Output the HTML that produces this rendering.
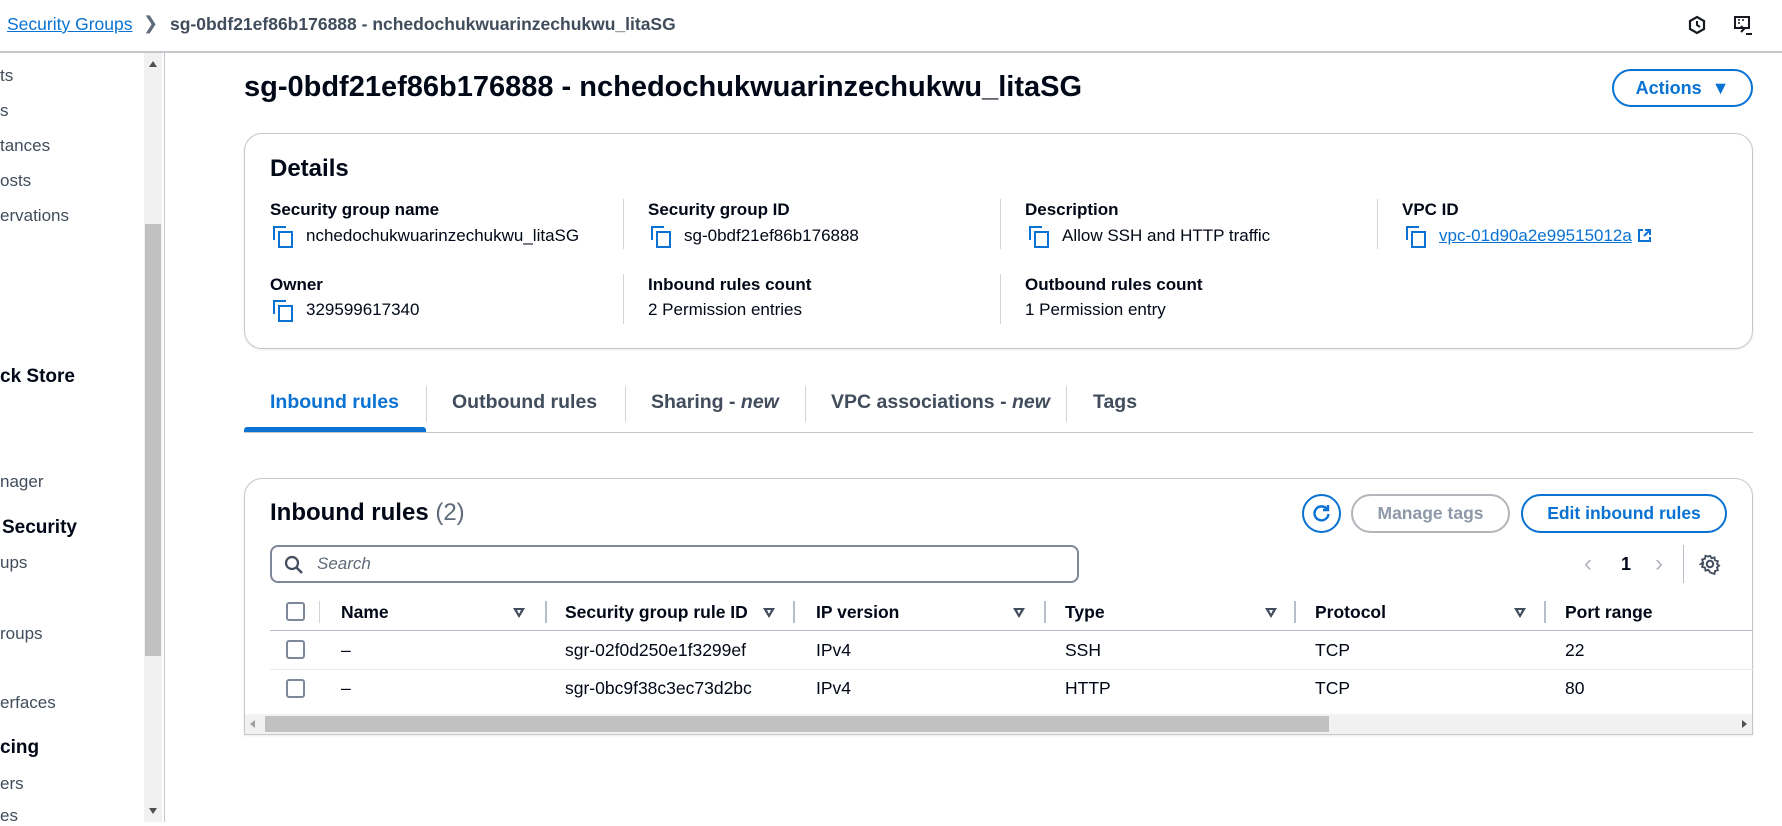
<!DOCTYPE html>
<html><head><meta charset="utf-8"><style>
*{margin:0;padding:0;box-sizing:border-box}
body{width:1782px;height:822px;overflow:hidden;background:#fff;font-family:"Liberation Sans",sans-serif;color:#000716;font-size:17px;position:relative}
.a{position:absolute;white-space:nowrap}
.b{font-weight:bold}
.lbl{font-weight:bold;font-size:17px}
.tab{font-size:19.5px;font-weight:bold;color:#414d5c}
.blue{color:#0972d3}
.cp{display:inline-block;width:17px;height:18px;position:relative;vertical-align:-3px;margin-right:16px}
.cp:before{content:"";position:absolute;left:0;top:0;width:11px;height:12px;border-left:2.5px solid #0972d3;border-top:2.5px solid #0972d3}
.cp:after{content:"";position:absolute;left:5px;top:5px;width:11px;height:13px;border:2.5px solid #0972d3}
.vd{position:absolute;width:1px;background:#d1d5db}
.tri{position:absolute;width:0;height:0;border-left:6px solid transparent;border-right:6px solid transparent;border-top:10px solid #414d5c}
.tri:after{content:"";position:absolute;left:-2px;top:-8px;border-left:2px solid transparent;border-right:2px solid transparent;border-top:4px solid #fff}
.chk{position:absolute;width:19px;height:19px;border:2px solid #7d8998;border-radius:3px}
.hd{position:absolute;width:2px;height:22px;background:#b6bec9}
.td{font-size:17.5px}
</style></head><body>
<!-- header -->
<div class="a blue" style="left:7px;top:14px;font-size:17.5px;text-decoration:underline">Security Groups</div>
<div class="a" style="left:143px;top:13px;font-size:18px;color:#5f6b7a">&#x276F;</div>
<div class="a b" style="left:170px;top:14px;font-size:17.5px;color:#414d5c">sg-0bdf21ef86b176888 - nchedochukwuarinzechukwu_litaSG</div>
<svg class="a" style="left:1687px;top:15px" width="20" height="20" viewBox="0 0 20 20"><path d="M10 2 L17 6 V14 L10 18 L3 14 V6 Z" fill="none" stroke="#16191f" stroke-width="2.2"/><path d="M10 6 V10 L13 12" fill="none" stroke="#16191f" stroke-width="2"/></svg>
<svg class="a" style="left:1733px;top:15px" width="22" height="22" viewBox="0 0 22 22"><rect x="2" y="2" width="14" height="11" fill="none" stroke="#16191f" stroke-width="2"/><path d="M5 5h2M9 5h2M5 8h2" stroke="#16191f" stroke-width="1.5"/><path d="M8 11 L11 14 L8 17" fill="none" stroke="#16191f" stroke-width="2"/><path d="M13 19h6" stroke="#16191f" stroke-width="2"/></svg>
<div class="a" style="left:0;top:51px;width:1782px;height:2px;background:#c6c6cd"></div>
<!-- sidebar -->
<div class="a" style="left:144px;top:53px;width:18px;height:769px;background:#f1f1f1"></div>
<div class="a" style="left:145px;top:224px;width:16px;height:432px;background:#c1c1c1"></div>
<div class="a" style="left:149px;top:61px;border-left:4px solid transparent;border-right:4px solid transparent;border-bottom:6px solid #505050"></div>
<div class="a" style="left:149px;top:808px;border-left:4px solid transparent;border-right:4px solid transparent;border-top:6px solid #505050"></div>
<div class="a" style="left:164px;top:53px;width:1px;height:769px;background:#c6c6cd"></div>
<div class="a" style="left:0;top:66px;color:#414d5c">ts</div>
<div class="a" style="left:0;top:101px;color:#414d5c">s</div>
<div class="a" style="left:0;top:136px;color:#414d5c">tances</div>
<div class="a" style="left:0;top:171px;color:#414d5c">osts</div>
<div class="a" style="left:0;top:206px;color:#414d5c">ervations</div>
<div class="a b" style="left:0;top:366px;font-size:19px">ck Store</div>
<div class="a" style="left:0;top:472px;color:#414d5c">nager</div>
<div class="a b" style="left:2px;top:517px;font-size:19px">Security</div>
<div class="a" style="left:0;top:553px;color:#414d5c">ups</div>
<div class="a" style="left:0;top:624px;color:#414d5c">roups</div>
<div class="a" style="left:0;top:693px;color:#414d5c">erfaces</div>
<div class="a b" style="left:0;top:737px;font-size:19px">cing</div>
<div class="a" style="left:0;top:774px;color:#414d5c">ers</div>
<div class="a" style="left:0;top:806px;color:#414d5c">es</div>
<!-- title -->
<div class="a b" style="left:244px;top:71px;font-size:29px">sg-0bdf21ef86b176888 - nchedochukwuarinzechukwu_litaSG</div>
<div class="a" style="left:1612px;top:69px;width:141px;height:38px;border:2px solid #0972d3;border-radius:20px;color:#0972d3;font-weight:bold;font-size:18px;text-align:center;line-height:34px">Actions &nbsp;&#x25BC;</div>
<!-- details -->
<div class="a" style="left:244px;top:133px;width:1509px;height:216px;border:1px solid #c6c6cd;border-radius:18px;box-shadow:0 1px 2px rgba(0,0,0,.08)"></div>
<div class="a b" style="left:270px;top:155px;font-size:24px">Details</div>
<div class="vd" style="left:623px;top:199px;height:50px"></div>
<div class="vd" style="left:1000px;top:199px;height:50px"></div>
<div class="vd" style="left:1377px;top:199px;height:50px"></div>
<div class="vd" style="left:623px;top:274px;height:50px"></div>
<div class="vd" style="left:1000px;top:274px;height:50px"></div>
<div class="a lbl" style="left:270px;top:200px">Security group name</div>
<div class="a" style="left:273px;top:226px"><span class="cp"></span>nchedochukwuarinzechukwu_litaSG</div>
<div class="a lbl" style="left:648px;top:200px">Security group ID</div>
<div class="a" style="left:651px;top:226px"><span class="cp"></span>sg-0bdf21ef86b176888</div>
<div class="a lbl" style="left:1025px;top:200px">Description</div>
<div class="a" style="left:1029px;top:226px"><span class="cp"></span>Allow SSH and HTTP traffic</div>
<div class="a lbl" style="left:1402px;top:200px">VPC ID</div>
<div class="a" style="left:1406px;top:226px"><span class="cp"></span><span class="blue" style="text-decoration:underline">vpc-01d90a2e99515012a</span> <svg width="15" height="15" viewBox="0 0 15 15" style="vertical-align:-2px"><path d="M6 2H2V13H13V9" fill="none" stroke="#0972d3" stroke-width="2"/><path d="M8 2H13V7M13 2L7 8" fill="none" stroke="#0972d3" stroke-width="2"/></svg></div>
<div class="a lbl" style="left:270px;top:275px">Owner</div>
<div class="a" style="left:273px;top:300px"><span class="cp"></span>329599617340</div>
<div class="a lbl" style="left:648px;top:275px">Inbound rules count</div>
<div class="a" style="left:648px;top:300px">2 Permission entries</div>
<div class="a lbl" style="left:1025px;top:275px">Outbound rules count</div>
<div class="a" style="left:1025px;top:300px">1 Permission entry</div>
<!-- tabs -->
<div class="a tab blue" style="left:270px;top:391px">Inbound rules</div>
<div class="a tab" style="left:452px;top:391px">Outbound rules</div>
<div class="a tab" style="left:651px;top:391px">Sharing - <i>new</i></div>
<div class="a tab" style="left:831px;top:391px">VPC associations - <i>new</i></div>
<div class="a tab" style="left:1093px;top:391px">Tags</div>
<div class="vd" style="left:426px;top:386px;height:36px"></div>
<div class="vd" style="left:625px;top:386px;height:36px"></div>
<div class="vd" style="left:805px;top:386px;height:36px"></div>
<div class="vd" style="left:1066px;top:386px;height:36px"></div>
<div class="a" style="left:244px;top:432px;width:1509px;height:1px;background:#c6c6cd"></div>
<div class="a" style="left:244px;top:427px;width:182px;height:5px;background:#0972d3;border-radius:3px 3px 0 0"></div>
<!-- inbound panel -->
<div class="a" style="left:244px;top:478px;width:1509px;height:257px;border:1px solid #c6c6cd;border-radius:18px 18px 0 0;box-shadow:0 1px 2px rgba(0,0,0,.08)"></div>
<div class="a" style="left:270px;top:499px;font-size:24px"><b>Inbound rules</b> <span style="color:#5f6b7a">(2)</span></div>
<div class="a" style="left:1302px;top:494px;width:39px;height:39px;border:2px solid #0972d3;border-radius:50%"></div>
<svg class="a" style="left:1311px;top:503px" width="21" height="21" viewBox="0 0 21 21"><path d="M16 6 A7 7 0 1 0 17.5 11" fill="none" stroke="#0972d3" stroke-width="2.4"/><path d="M17 2 V7 H12" fill="none" stroke="#0972d3" stroke-width="2.4"/></svg>
<div class="a" style="left:1351px;top:494px;width:159px;height:39px;border:2px solid #b4b4bb;border-radius:20px;color:#8d99a8;font-weight:bold;font-size:17.5px;text-align:center;line-height:35px">Manage tags</div>
<div class="a" style="left:1521px;top:494px;width:206px;height:39px;border:2px solid #0972d3;border-radius:20px;color:#0972d3;font-weight:bold;font-size:17.5px;text-align:center;line-height:35px">Edit inbound rules</div>
<div class="a" style="left:270px;top:545px;width:809px;height:38px;border:2px solid #7d8998;border-radius:8px"></div>
<svg class="a" style="left:284px;top:555px" width="20" height="20" viewBox="0 0 20 20"><circle cx="8" cy="8" r="6" fill="none" stroke="#414d5c" stroke-width="2.2"/><path d="M12.5 12.5 L18 18" stroke="#414d5c" stroke-width="2.4"/></svg>
<div class="a" style="left:317px;top:554px;font-style:italic;color:#5f6b7a">Search</div>
<div class="a" style="left:1584px;top:550px;font-size:24px;color:#b4b4bb">&#x2039;</div>
<div class="a b" style="left:1621px;top:554px;font-size:18px">1</div>
<div class="a" style="left:1655px;top:550px;font-size:24px;color:#b4b4bb">&#x203A;</div>
<div class="vd" style="left:1683px;top:545px;height:38px;background:#b6bec9"></div>
<svg class="a" style="left:1699px;top:553px" width="22" height="22" viewBox="0 0 24 24"><path d="M12 2l2 3 3.5-1 .5 3.5 3.5 1-1 3.5 2.5 2-2.5 2 1 3.5-3.5 1-.5 3.5-3.5-1L12 22l-2-3-3.5 1-.5-3.5-3.5-1 1-3.5L1 12l2.5-2-1-3.5 3.5-1L6.5 2 10 3z" fill="none" stroke="#414d5c" stroke-width="2.2" transform="translate(12 12) scale(.9) translate(-12 -12)"/><circle cx="12" cy="12" r="3.5" fill="none" stroke="#414d5c" stroke-width="2.2"/></svg>
<!-- table header -->
<div class="chk" style="left:286px;top:602px"></div>
<div class="vd" style="left:319px;top:601px;height:22px"></div>
<div class="a b td" style="left:341px;top:602px">Name</div><div class="tri" style="left:513px;top:608px"></div><div class="hd" style="left:545px;top:601px"></div>
<div class="a b td" style="left:565px;top:602px">Security group rule ID</div><div class="tri" style="left:763px;top:608px"></div><div class="hd" style="left:793px;top:601px"></div>
<div class="a b td" style="left:816px;top:602px">IP version</div><div class="tri" style="left:1013px;top:608px"></div><div class="hd" style="left:1044px;top:601px"></div>
<div class="a b td" style="left:1065px;top:602px">Type</div><div class="tri" style="left:1265px;top:608px"></div><div class="hd" style="left:1294px;top:601px"></div>
<div class="a b td" style="left:1315px;top:602px">Protocol</div><div class="tri" style="left:1514px;top:608px"></div><div class="hd" style="left:1544px;top:601px"></div>
<div class="a b td" style="left:1565px;top:602px">Port range</div>
<div class="a" style="left:270px;top:630px;width:1483px;height:1px;background:#b6bec9"></div>
<div class="chk" style="left:286px;top:640px"></div>
<div class="a td" style="left:341px;top:640px">–</div>
<div class="a td" style="left:565px;top:640px">sgr-02f0d250e1f3299ef</div>
<div class="a td" style="left:816px;top:640px">IPv4</div>
<div class="a td" style="left:1065px;top:640px">SSH</div>
<div class="a td" style="left:1315px;top:640px">TCP</div>
<div class="a td" style="left:1565px;top:640px">22</div>
<div class="a" style="left:270px;top:669px;width:1483px;height:1px;background:#e9ebed"></div>
<div class="chk" style="left:286px;top:679px"></div>
<div class="a td" style="left:341px;top:678px">–</div>
<div class="a td" style="left:565px;top:678px">sgr-0bc9f38c3ec73d2bc</div>
<div class="a td" style="left:816px;top:678px">IPv4</div>
<div class="a td" style="left:1065px;top:678px">HTTP</div>
<div class="a td" style="left:1315px;top:678px">TCP</div>
<div class="a td" style="left:1565px;top:678px">80</div>
<!-- h scrollbar -->
<div class="a" style="left:245px;top:714px;width:1507px;height:20px;background:#f1f1f1"></div>
<div class="a" style="left:265px;top:716px;width:1064px;height:16px;background:#c1c1c1"></div>
<div class="a" style="left:250px;top:720px;border-top:4px solid transparent;border-bottom:4px solid transparent;border-right:5px solid #a0a0a0"></div>
<div class="a" style="left:1742px;top:720px;border-top:4px solid transparent;border-bottom:4px solid transparent;border-left:5px solid #505050"></div>
<div class="a" style="left:244px;top:734px;width:1509px;height:1px;background:#c6c6cd"></div>
</body></html>
